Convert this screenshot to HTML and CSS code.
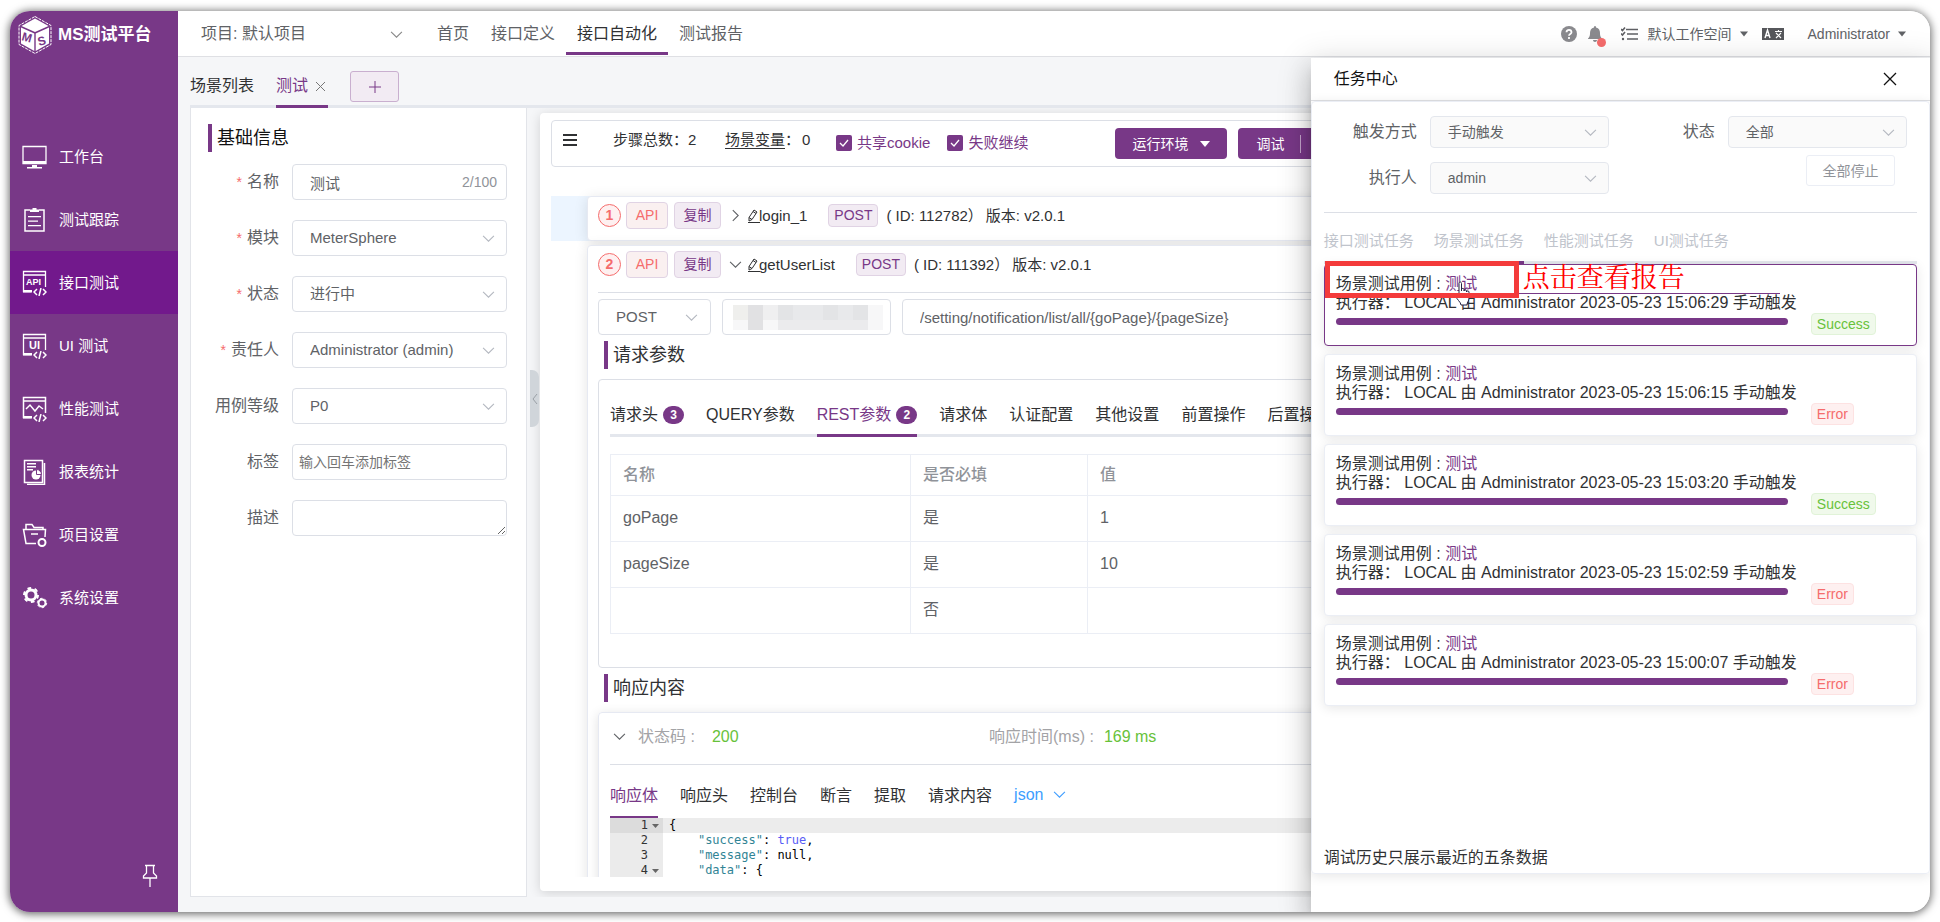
FILE: index.html
```html
<!DOCTYPE html>
<html lang="zh-CN">
<head>
<meta charset="utf-8">
<title>MS测试平台</title>
<link rel="stylesheet" href="styles.css">
</head>
<body>
<svg class="defs" aria-hidden="true">
  <symbol id="chevron" viewBox="0 0 12 12"><path d="M1 3.500l5 5 5-5" fill="none" stroke="currentColor"/></symbol>
  <symbol id="caret" viewBox="0 0 10 10"><path d="M0 2h10L5 8z" fill="currentColor"/></symbol>
  <symbol id="check" viewBox="0 0 12 12"><path d="M2 6l3 3 5-6" fill="none" stroke="currentColor" stroke-width="1.300"/></symbol>
  <symbol id="pencil" viewBox="0 0 14 16"><path d="M2 9.500L7 2l3 2-5 7.500L2 13zM6 3.500l3 2M2 9.500l3 2M1 14.500h12" fill="none" stroke="currentColor"/></symbol>
  <symbol id="code" viewBox="0 0 14 8"><path d="M4 1L1 4l3 3M10 1l3 3-3 3M8 0L6 8" fill="none" stroke="currentColor" stroke-width="1.500"/></symbol>
</svg>
<div class="window">
  <aside class="sidebar">
    <div class="brand">
      <svg width="36" height="40" viewBox="0 0 36 40">
        <path d="M18 1.500l16 9v19l-16 9-16-9v-19z" fill="none" stroke="#fff" stroke-dasharray="3 1"/>
        <path d="M18 3.500l13.500 7.500L18 17 4.500 11z" fill="#fff"/>
        <path d="M4 12.500l13.300 6v17.500L4 28.500zM32 12.500l-13.300 6v17.500L32 28.500z" fill="#fff"/>
        <text x="4" y="25" transform="rotate(16 4 25)" class="logo-letter">M</text>
        <text x="22" y="31" transform="rotate(-16 22 31)" class="logo-letter">S</text>
      </svg>
      <span>MS测试平台</span>
    </div>
    <nav class="menu">
      <a href="#"><svg width="26" height="26" viewBox="0 0 26 26"><path d="M1 2.500h23v17H1z" fill="none" stroke="#fff" stroke-width="1.300"/><path d="M1 17h23v3H1zM10 21h5v2h-5zM5 23h15v1.500H5z" fill="#fff"/></svg>工作台</a>
      <a href="#"><svg width="26" height="26" viewBox="0 0 26 26"><path d="M8 3H3v21h19V3h-5" fill="none" stroke="#fff" stroke-width="1.500"/><path d="M8 2.500h2.500V1h4v1.500H17V5H8zM6 9h13v1.300H6zM6 13.500h10v1.300H6zM6 18h13v1.300H6z" fill="#fff"/></svg>测试跟踪</a>
      <a href="#" class="on"><svg width="26" height="26" viewBox="0 0 26 26"><path d="M9 21.500H1.500v-20h22V17M1 5h22" fill="none" stroke="#fff" stroke-width="1.300"/><path d="M1 20h9v2.500H1z" fill="#fff"/><text x="4" y="15" class="ico-letter">API</text><use href="#code" x="11" y="18" width="14" height="8"/></svg>接口测试</a>
      <a href="#"><svg width="26" height="26" viewBox="0 0 26 26"><path d="M9 21.500H1.500v-20h22V17M1 5h22" fill="none" stroke="#fff" stroke-width="1.300"/><path d="M1 20h9v2.500H1z" fill="#fff"/><text x="7" y="16" class="ico-letter big">UI</text><use href="#code" x="11" y="18" width="14" height="8"/></svg>UI 测试</a>
      <a href="#"><svg width="26" height="26" viewBox="0 0 26 26"><path d="M9 21.500H1.500v-20h22V17M1 5h22M4 13l4-4 5 6 4-5 4 3" fill="none" stroke="#fff" stroke-width="1.500"/><path d="M1 20h9v2.500H1z" fill="#fff"/><use href="#code" x="11" y="18" width="14" height="8"/></svg>性能测试</a>
      <a href="#"><svg width="26" height="26" viewBox="0 0 26 26"><path d="M2.500 1.500h18v22h-18zM22.500 4v21.500H5" fill="none" stroke="#fff" stroke-width="1.500"/><path d="M5 4h9v1.500H5zM5 7h9v1.500H5zM5 10h6v1.500H5z" fill="#fff"/><circle cx="14" cy="16" r="4.500" fill="#fff"/><path d="M14.500 15.500v-5a5 5 0 0 1 5 5z" fill="#fff" stroke="#783887"/></svg>报表统计</a>
      <a href="#"><svg width="26" height="26" viewBox="0 0 26 26"><path d="M4 7V2.500h6l2 3h9V8M14 21.500H4L1.500 7.500h22L23 15M9 12h7" fill="none" stroke="#fff" stroke-width="1.500"/><circle cx="20" cy="20.500" r="3.500" fill="none" stroke="#fff" stroke-width="2"/></svg>项目设置</a>
      <a href="#"><svg width="26" height="26" viewBox="0 0 26 26"><circle cx="9" cy="10" r="5" fill="none" stroke="#fff" stroke-width="3"/><circle cx="9" cy="10" r="7" fill="none" stroke="#fff" stroke-width="2" stroke-dasharray="3.700 3.600"/><circle cx="20" cy="18" r="3.500" fill="none" stroke="#fff" stroke-width="2"/><circle cx="20" cy="18" r="4.700" fill="none" stroke="#fff" stroke-dasharray="2.500 2.400"/></svg>系统设置</a>
    </nav>
    <button class="pin" aria-label="固定菜单"><svg width="16" height="24" viewBox="0 0 16 24"><path d="M3 1.500h10M4.500 2v7L1.500 12v2h13v-2l-3-3V2M8 14v9" fill="none" stroke="#fff" stroke-width="1.300"/></svg></button>
  </aside>

  <div class="main">
    <header class="topbar">
      <div class="pick project"><select aria-label="项目"><option>项目: 默认项目</option></select><svg><use href="#chevron"/></svg></div>
      <nav class="topnav">
        <a href="#">首页</a><a href="#">接口定义</a><a href="#" class="on">接口自动化</a><a href="#">测试报告</a>
      </nav>
      <div class="tools">
        <button aria-label="帮助"><svg width="16" height="16" viewBox="0 0 16 16"><circle cx="8" cy="8" r="8" fill="#8a8a8e"/><path d="M5.500 6.300c0-3.300 5-3.300 5 0C10.500 8 8 8 8 9.800M8 11v2" fill="none" stroke="#fff" stroke-width="1.800"/></svg></button>
        <button class="bell" aria-label="通知"><svg width="16" height="16" viewBox="0 0 16 16"><path d="M8 0c1 0 1 1 1 1.500 3 .5 4 3 4 5.500 0 3 .5 4 2 5.500v.5H1v-.5C2.500 11 3 10 3 7c0-2.500 1-5 4-5.500C7 1 7 0 8 0zM6 14h4c0 2.500-4 2.500-4 0z" fill="#8a8a8e"/></svg></button>
        <button aria-label="任务"><svg width="17" height="14" viewBox="0 0 17 14"><path d="M5 2.500h12M6 7h11M6 12h11M0 2l1.500 1.500L4 .500M0 6.500L1.500 8 4 5" fill="none" stroke="#5f6064" stroke-width="1.600"/><circle cx="2" cy="12" r="1.200" fill="#5f6064"/></svg></button>
        <button class="ws">默认工作空间<svg class="caret"><use href="#caret"/></svg></button>
        <button aria-label="语言"><svg width="22" height="12" viewBox="0 0 22 12"><path d="M0 0h22v12H0z" fill="#56575b"/><path d="M3 10l2.500-8L8 10M4 7.500h3" fill="none" stroke="#fff" stroke-width="1.400"/><path d="M13 3.500h7M16.500 2v1.500M14 5l5 5M19 5l-5 5" fill="none" stroke="#fff" stroke-width="1.200"/></svg></button>
        <button class="user">Administrator<svg class="caret"><use href="#caret"/></svg></button>
      </div>
    </header>

    <div class="page">
      <div class="pagetabs">
        <a href="#">场景列表</a>
        <a href="#" class="on">测试<svg width="9" height="9" viewBox="0 0 9 9"><path d="M0 0l9 9M9 0L0 9" stroke="#777"/></svg></a>
        <button class="add" aria-label="添加"><svg width="12" height="12" viewBox="0 0 12 12"><path d="M6 0v12M0 6h12" stroke="#783887"/></svg></button>
      </div>
      <div class="cols">
        <section class="info">
          <h2 class="title">基础信息</h2>
          <form class="fields">
            <label for="f1" class="req">名称</label><div class="pick"><input id="f1" value="测试"><span class="count">2/100</span></div>
            <label for="f2" class="req">模块</label><div class="pick"><select id="f2"><option>MeterSphere</option></select><svg><use href="#chevron"/></svg></div>
            <label for="f3" class="req">状态</label><div class="pick"><select id="f3"><option>进行中</option></select><svg><use href="#chevron"/></svg></div>
            <label for="f4" class="req">责任人</label><div class="pick"><select id="f4"><option>Administrator (admin)</option></select><svg><use href="#chevron"/></svg></div>
            <label for="f5">用例等级</label><div class="pick"><select id="f5"><option>P0</option></select><svg><use href="#chevron"/></svg></div>
            <label for="f6">标签</label><div class="pick"><input id="f6" class="tags" placeholder="输入回车添加标签"></div>
            <label for="f7">描述</label><div class="pick"><textarea id="f7" rows="1"></textarea></div>
          </form>
        </section>

        <div class="stage">
          <button class="fold" aria-label="收起"><svg width="6" height="12" viewBox="0 0 6 12"><path d="M5 1L1 6l4 5" fill="none" stroke="#9aa0a6"/></svg></button>
          <section class="scenario">
            <div class="bar">
              <svg class="burger" width="14" height="12" viewBox="0 0 14 12"><path d="M0 1h14M0 6h14M0 11h14" stroke="#303133" stroke-width="2"/></svg>
              <span class="total">步骤总数：2</span>
              <span class="vars"><a href="#">场景变量</a>：<b>0</b></span>
              <label class="tick"><input type="checkbox" checked><svg><use href="#check"/></svg>共享cookie</label>
              <label class="tick"><input type="checkbox" checked><svg><use href="#check"/></svg>失败继续</label>
              <button class="primary env">运行环境<svg class="caret"><use href="#caret"/></svg></button>
              <button class="primary debug">调试</button>
            </div>
            <div class="steps">
              <div class="step picked">
                <article class="card">
                  <div class="head">
                    <span class="num">1</span><span class="tag api">API</span><span class="tag copy">复制</span>
                    <svg class="arrow side"><use href="#chevron"/></svg>
                    <svg class="pen"><use href="#pencil"/></svg><span class="name">login_1</span>
                    <span class="tag method">POST</span><span>( ID: 112782）</span><span class="ver">版本: v2.0.1</span>
                  </div>
                </article>
              </div>
              <div class="step">
                <article class="card">
                  <div class="head">
                    <span class="num">2</span><span class="tag api">API</span><span class="tag copy">复制</span>
                    <svg class="arrow"><use href="#chevron"/></svg>
                    <svg class="pen"><use href="#pencil"/></svg><span class="name">getUserList</span>
                    <span class="tag method">POST</span><span>( ID: 111392）</span><span class="ver">版本: v2.0.1</span>
                  </div>
                  <div class="request">
                    <div class="pick verb"><select aria-label="请求方法"><option>POST</option></select><svg><use href="#chevron"/></svg></div>
                    <div class="pick host"><input aria-label="域名"><svg class="mosaic" viewBox="0 0 150 25" aria-hidden="true">
                      <path fill="#efefed" d="M0 0h15v15H0z"/><path fill="#e1e1e3" d="M15 0h15v25H15z"/><path fill="#efeff0" d="M30 0h15v15H30z"/><path fill="#e3e4e6" d="M45 0h15v15H45zM90 0h15v15H90zM120 0h15v15h-15z"/><path fill="#e8e9eb" d="M60 0h30v15H60zM105 0h15v15h-15z"/><path fill="#f7f7f8" d="M135 0h15v25h-15zM0 15h15v10H0zM30 15h15v10H30z"/><path fill="#ebebed" d="M45 15h90v10H45z"/></svg></div>
                    <div class="pick url"><input aria-label="路径" value="/setting/notification/list/all/{goPage}/{pageSize}"></div>
                  </div>
                  <h3 class="title">请求参数</h3>
                  <div class="box params">
                    <nav class="tabs line">
                      <a href="#">请求头<i>3</i></a><a href="#">QUERY参数</a><a href="#" class="on">REST参数<i>2</i></a><a href="#">请求体</a><a href="#">认证配置</a><a href="#">其他设置</a><a href="#">前置操作</a><a href="#">后置操作</a><a href="#">断言规则</a>
                    </nav>
                    <table>
                      <colgroup><col class="c1"><col class="c2"><col></colgroup>
                      <thead><tr><th>名称</th><th>是否必填</th><th>值</th></tr></thead>
                      <tbody>
                        <tr><td>goPage</td><td>是</td><td>1</td></tr>
                        <tr><td>pageSize</td><td>是</td><td>10</td></tr>
                        <tr><td></td><td>否</td><td></td></tr>
                      </tbody>
                    </table>
                  </div>
                  <h3 class="title">响应内容</h3>
                  <div class="box reply">
                    <div class="status">
                      <svg class="arrow"><use href="#chevron"/></svg>
                      <div class="code">状态码 :<b>200</b></div>
                      <div class="time">响应时间(ms) :<b>169 ms</b></div>
                    </div>
                    <nav class="tabs thin">
                      <a href="#" class="on">响应体</a><a href="#">响应头</a><a href="#">控制台</a><a href="#">断言</a><a href="#">提取</a><a href="#">请求内容</a>
                      <button class="json">json<svg><use href="#chevron"/></svg></button>
                    </nav>
                    <div class="editor">
                      <div class="row cur"><span class="ln">1<svg><use href="#caret"/></svg></span><code>{</code></div>
                      <div class="row"><span class="ln">2</span><code>    <em>"success"</em>: <u>true</u>,</code></div>
                      <div class="row"><span class="ln">3</span><code>    <em>"message"</em>: null,</code></div>
                      <div class="row"><span class="ln">4<svg><use href="#caret"/></svg></span><code>    <em>"data"</em>: {</code></div>
                    </div>
                  </div>
                </article>
              </div>
            </div>
          </section>
        </div>
      </div>
    </div>
  </div>

  <aside class="drawer">
    <div class="dhead"><h2>任务中心</h2><button aria-label="关闭"><svg width="14" height="14" viewBox="0 0 14 14"><path d="M1 1l12 12M13 1L1 13" stroke="#111" stroke-width="1.300"/></svg></button></div>
    <div class="dbody">
      <form class="filters">
        <label for="g1">触发方式</label><div class="pick"><select id="g1"><option>手动触发</option></select><svg><use href="#chevron"/></svg></div>
        <label for="g2">状态</label><div class="pick"><select id="g2"><option>全部</option></select><svg><use href="#chevron"/></svg></div>
        <label for="g3">执行人</label><div class="pick"><select id="g3"><option>admin</option></select><svg><use href="#chevron"/></svg></div>
        <button type="button" class="stop">全部停止</button>
      </form>
      <nav class="dtabs"><a href="#">接口测试任务</a><a href="#" class="on">场景测试任务</a><a href="#">性能测试任务</a><a href="#">UI测试任务</a></nav>
      <div class="tasks">
        <article class="task on">
          <div class="desc"><p class="case">场景测试用例 : <a href="#">测试</a></p><p>执行器： LOCAL 由 Administrator 2023-05-23 15:06:29 手动触发</p><div class="progress"></div></div>
          <span class="state ok">Success</span>
          <svg class="hand" width="16" height="26" viewBox="0 0 16 26"><path d="M4 15V2.500c0-2 2.500-2 2.500 0V10V8.500c0-1.500 2.500-1.500 2.500 0V10c0-1.500 2.500-1.500 2.500 0v1c0-1.500 2.500-1.500 2.500 0v6c0 3-2 4-2 7H6c0-3-5-6-5-9 0-2 2-2 3 0z" fill="#fff" stroke="#222244"/></svg>
          <div class="mark"></div><strong class="note">点击查看报告</strong>
        </article>
        <article class="task">
          <div class="desc"><p class="case">场景测试用例 : <a href="#">测试</a></p><p>执行器： LOCAL 由 Administrator 2023-05-23 15:06:15 手动触发</p><div class="progress"></div></div>
          <span class="state err">Error</span>
        </article>
        <article class="task">
          <div class="desc"><p class="case">场景测试用例 : <a href="#">测试</a></p><p>执行器： LOCAL 由 Administrator 2023-05-23 15:03:20 手动触发</p><div class="progress"></div></div>
          <span class="state ok">Success</span>
        </article>
        <article class="task">
          <div class="desc"><p class="case">场景测试用例 : <a href="#">测试</a></p><p>执行器： LOCAL 由 Administrator 2023-05-23 15:02:59 手动触发</p><div class="progress"></div></div>
          <span class="state err">Error</span>
        </article>
        <article class="task">
          <div class="desc"><p class="case">场景测试用例 : <a href="#">测试</a></p><p>执行器： LOCAL 由 Administrator 2023-05-23 15:00:07 手动触发</p><div class="progress"></div></div>
          <span class="state err">Error</span>
        </article>
      </div>
      <p class="tip">调试历史只展示最近的五条数据</p>
    </div>
  </aside>
</div>
</body>
</html>
```
FILE: styles.css
```css
* { box-sizing: border-box; }
:root { --p: #783887; --line: #dcdfe6; --soft: #ebeef5; --text: #606266; --ink: #303133; }
body { margin: 0; padding: 11px 10px 10px; height: 100vh; background: #fff; color: var(--ink); font: 16px/20px "Liberation Sans", "Noto Sans CJK SC", sans-serif; }
a { color: inherit; text-decoration: none; }
h2, h3, p { margin: 0; font-weight: 400; }
button, input, select, textarea { font: inherit; color: inherit; margin: 0; }
button { border: 0; background: none; padding: 0; display: inline-flex; align-items: center; justify-content: center; }
svg { flex: none; }
.defs { position: absolute; width: 0; height: 0; }
.window { position: relative; display: flex; height: 100%; border-radius: 20px; overflow: hidden; background: #f5f6f8; box-shadow: 0 1px 9px 1px rgba(0, 0, 0, .6); }

.sidebar { width: 168px; flex: none; background: var(--p); color: #fff; display: flex; flex-direction: column; }
.brand { display: flex; align-items: center; gap: 5px; height: 48px; padding-left: 7px; font-weight: 700; font-size: 17px; margin-bottom: 66px; }
.logo-letter { font: 700 12px "Liberation Sans", sans-serif; fill: var(--p); }
.ico-letter { font: 700 9px "Liberation Sans", sans-serif; fill: #fff; }
.ico-letter.big { font-size: 11px; }
.menu a { display: flex; align-items: center; gap: 11px; height: 63px; padding-left: 12px; font-size: 15px; }
.menu a.on { background: #72198c; }
.pin { margin: auto 20px 24px auto; }

.main { flex: 1; min-width: 0; display: flex; flex-direction: column; }
.topbar { display: flex; height: 46px; flex: none; background: #fff; border-bottom: 1px solid #dfe0e4; color: var(--text); }
.pick { position: relative; display: flex; align-items: center; }
.pick > select, .pick > input, .pick > textarea { width: 100%; height: 36px; border: 1px solid var(--line); border-radius: 4px; background: #fff; color: var(--text); font-size: 15px; padding: 0 17px; appearance: none; outline: 0; }
.pick > svg { position: absolute; right: 12px; width: 13px; height: 13px; color: #b4b8c0; pointer-events: none; }
.topbar .project { width: 226px; margin: 5px 22px 4px 0; }
.project > select { border: 0; padding-left: 23px; font-size: 16px; }
.project > svg { right: 1px; color: #888; }
.topnav { display: flex; }
.topnav a { padding: 0 11px; height: 44px; line-height: 45px; border-bottom: 3px solid transparent; }
.topnav .on { border-color: var(--p); color: var(--ink); }
.tools { display: flex; align-items: center; margin-left: auto; padding-right: 24px; font-size: 14px; }
.tools button { margin-right: 16px; }
.tools .bell { position: relative; margin-right: 18px; margin-left: -6px; }
.bell::after { content: ""; position: absolute; right: -3px; bottom: -5px; width: 9px; height: 9px; border-radius: 50%; background: #f56c6c; }
.caret { width: 10px; height: 10px; margin-left: 12px; }
.tools .caret { width: 8px; height: 10px; margin-left: 8px; }
.tools .ws { margin-left: -6px; margin-right: 14px; }
.tools .user { margin: 0 0 0 8px; }

.page { flex: 1; min-height: 0; display: flex; flex-direction: column; padding: 0 0 15px 12px; }
.pagetabs { display: flex; height: 51px; flex: none; gap: 22px; box-shadow: inset 0 -3px #e4e7ed; }
.pagetabs a { line-height: 58px; height: 51px; }
.pagetabs .on { color: var(--p); border-bottom: 3px solid var(--p); display: flex; align-items: center; gap: 8px; padding: 10px 3px 0 0; line-height: 38px; }
.add { width: 49px; height: 31px; margin-top: 14px; background: #f2ebf3; border: 1px solid #c9afcf; border-radius: 3px; }
.cols { flex: 1; min-height: 0; display: flex; }
.info { width: 337px; flex: none; background: #fff; border: 1px solid #e2e4e9; border-top: 0; padding: 16px 19px 0 17px; }
.title { border-left: 4px solid var(--p); padding-left: 5px; font-size: 18px; height: 28px; line-height: 28px; color: #111; }
.fields { display: grid; grid-template-columns: 1fr 215px; gap: 20px 13px; margin-top: 12px; align-items: center; justify-items: end; color: var(--text); }
.fields .pick { width: 100%; }
.req::before { content: "*"; color: #f56c6c; font-size: 14px; margin-right: 5px; }
.count { position: absolute; right: 10px; font-size: 14px; color: #909399; }
.pick > .tags { font-size: 14px; padding: 0 6px; }
.tags::placeholder { color: #757575; }
.pick > textarea { resize: vertical; }

.stage { position: relative; flex: 1; min-width: 0; overflow: hidden; padding: 5px 0 6px 13px; }
.fold { position: absolute; left: 3px; top: 262px; width: 9px; height: 57px; background: #d0d5da; border-radius: 0 7px 7px 0; }
.scenario { height: 100%; background: #fff; border-radius: 4px; box-shadow: 0 2px 12px rgba(0, 0, 0, .15); padding: 7px 11px 14px; display: flex; flex-direction: column; }
.bar { display: flex; align-items: center; height: 47px; flex: none; border: 1px solid var(--line); border-radius: 4px; padding-left: 11px; font-size: 15px; }
.burger { margin: -8px 36px 0 0; }
.total { width: 112px; margin-top: -8px; }
.vars { width: 111px; margin-top: -8px; }
.vars a { border-bottom: 1px solid var(--ink); }
.vars b { font-weight: 400; margin-left: 2px; }
.tick { position: relative; display: flex; align-items: center; gap: 5px; color: var(--p); margin: -1px 17px 0 0; }
.tick input { appearance: none; width: 16px; height: 16px; margin: 0; background: var(--p); border-radius: 2px; }
.tick svg { position: absolute; left: 2px; width: 12px; height: 12px; color: #fff; }
.primary { background: var(--p); color: #fff; font-size: 14px; height: 31px; border-radius: 4px; }
.env { width: 112px; margin-left: 70px; }
.debug { width: 130px; margin-left: 11px; justify-content: flex-start; padding-left: 18px; }
.debug::after { content: ""; width: 1px; height: 18px; background: #c3a5ca; margin-left: 16px; }
.steps { flex: 1; min-height: 0; overflow: hidden; padding-top: 29px; }
.step { padding-left: 36px; margin-bottom: 4px; }
.picked { background: #ecf5ff; }
.card { background: #fff; border: 1px solid #e6e9f2; border-radius: 4px; box-shadow: 0 2px 14px rgba(0, 0, 0, .11); padding: 0 10px; }
.picked .card { padding-bottom: 6px; }
.head { display: flex; align-items: center; height: 37px; font-size: 15px; white-space: nowrap; }
.num { width: 23px; height: 23px; border: 1px solid #f56c6c; border-radius: 50%; background: #fef0f0; color: #f56c6c; font-weight: 700; font-size: 14px; line-height: 21px; text-align: center; margin-right: 5px; }
.tag { border: 1px solid #e0d3e4; border-radius: 4px; background: #f2ebf3; color: var(--p); font-size: 14px; text-align: center; height: 27px; line-height: 24px; }
.api { width: 42px; background: #faf0f0; color: #f56c6c; margin-right: 6px; }
.copy { width: 47px; margin-right: 8px; }
.arrow { width: 13px; height: 13px; color: var(--text); }
.side { transform: rotate(-90deg); }
.pen { width: 14px; height: 16px; margin: 0 -2px 0 5px; color: var(--ink); }
.name { margin-right: 21px; }
.method { width: 50px; height: 23px; line-height: 21px; margin-right: 8px; }
.ver { margin-left: 3px; }
.request { display: flex; gap: 11px; border-top: 1px solid var(--line); margin-top: 9px; padding: 6px 0; }
.verb { width: 113px; }
.verb > svg { right: 13px; }
.host { width: 169px; }
.url { flex: 1; }
.pick > .mosaic { width: 150px; height: 25px; left: 11px; right: auto; }
.card .title { margin-left: 6px; color: var(--ink); }
.box { border: 1px solid var(--line); border-radius: 4px; margin: 10px 0 6px; padding: 0 0 33px 11px; }
.tabs { display: flex; gap: 22px; white-space: nowrap; color: var(--ink); }
.line { box-shadow: inset 0 -3px #e4e7ed; height: 42px; margin-top: 15px; }
.tabs a { display: flex; align-items: center; gap: 5px; border-bottom: 3px solid transparent; }
.tabs a.on { color: var(--p); border-color: var(--p); }
.tabs i { font: 700 12px/18px "Liberation Sans", sans-serif; width: 21px; height: 18px; text-align: center; background: var(--p); color: #fff; border-radius: 9px; }
table { width: 100%; border-collapse: collapse; table-layout: fixed; margin-top: 17px; color: var(--text); }
.c1 { width: 300px; }
.c2 { width: 177px; }
th, td { border: 1px solid var(--soft); text-align: left; padding: 0 12px; height: 46px; }
th { height: 41px; color: #909399; font-weight: 500; }
td { padding-bottom: 2px; }
.reply { border-color: #e6e9f2; box-shadow: 0 2px 12px rgba(0, 0, 0, .12); padding-bottom: 80px; }
.status { display: flex; align-items: center; height: 52px; border-bottom: 1px solid var(--line); color: #a3a3a6; padding: 0 0 4px 3px; }
.status .code { width: 351px; margin-left: 12px; }
.status b { color: #67c23a; font-weight: 400; margin-left: 17px; }
.status .time b { margin-left: 10px; }
.thin { height: 43px; margin-top: 10px; }
.thin a { border-bottom-width: 2px; }
.json { color: #409eff; gap: 10px; padding-bottom: 4px; }
.json svg { width: 13px; height: 13px; }
.editor { font: 12px/15px "DejaVu Sans Mono", monospace; color: #000; }
.row { display: flex; }
.ln { position: relative; width: 53px; text-align: right; padding-right: 15px; background: #ebebeb; color: #333; }
.ln svg { position: absolute; right: 4px; top: 4px; width: 7px; height: 8px; color: #666; }
.row code { flex: 1; font: inherit; white-space: pre; padding-left: 6px; }
.cur code { background: #ececec; }
.cur .ln { background: #dcdcdc; }
.row em { font-style: normal; color: #318495; }
.row u { text-decoration: none; color: #585cf6; }

.drawer { position: absolute; right: 0; top: 47px; bottom: 0; width: 32.25%; min-width: 600px; background: #fff; display: flex; flex-direction: column; padding-bottom: 38px; box-shadow: 0 8px 10px -5px rgba(0, 0, 0, .2), 0 16px 24px 2px rgba(0, 0, 0, .14), 0 6px 30px 5px rgba(0, 0, 0, .12); }
.dhead { display: flex; justify-content: space-between; align-items: center; height: 43px; flex: none; padding: 0 33px 0 23px; border-bottom: 1px solid #dfe0e4; }
.dhead h2 { font-size: 16px; color: #111; }
.dbody { flex: 1; min-height: 0; border: 1px solid var(--soft); border-radius: 4px; box-shadow: 0 2px 12px rgba(0, 0, 0, .1); padding: 14px 12px 5px; display: flex; flex-direction: column; }
.filters { display: grid; grid-template-columns: 93px 179px 93px 1fr; column-gap: 13px; row-gap: 14px; align-items: center; border-bottom: 1px solid var(--line); padding: 0 10px 18px 0; color: var(--text); }
.filters label { text-align: right; }
.filters .pick > select { height: 32px; background: #fafafa; border-color: #e4e7ed; font-size: 14px; }
.stop { grid-column: 4; justify-self: end; align-self: start; margin: -7px 12px 0 0; width: 89px; height: 31px; border: 1px solid var(--soft); border-radius: 3px; font-size: 14px; color: #909399; }
.dtabs { display: flex; gap: 20px; height: 51px; flex: none; font-size: 15px; line-height: 56px; color: #c0c4cc; box-shadow: inset 0 -3px #e4e7ed; }
.dtabs .on { border-bottom: 3px solid var(--p); }
.tasks { display: flex; flex-direction: column; gap: 8px; }
.task { position: relative; display: flex; height: 82px; border: 1px solid var(--soft); border-radius: 4px; background: #fff; box-shadow: 0 2px 12px rgba(0, 0, 0, .1); padding: 10px 11px; line-height: 18px; }
.task.on { border-color: var(--p); }
.desc { width: 452px; flex: none; white-space: nowrap; }
.case { margin-bottom: 1px; }
.case a { color: var(--p); }
.task.on .case { border-bottom: 1px solid var(--p); margin: 0 8px 0 0; }
.progress { height: 7px; border-radius: 4px; background: var(--p); margin-top: 6px; }
.state { align-self: flex-start; margin: 38px 0 0 23px; height: 22px; border: 1px solid; border-radius: 4px; padding: 0 5px; font-size: 14px; line-height: 20px; }
.ok { color: #67c23a; background: #f0f9eb; border-color: #e1f3d8; }
.err { color: #f56c6c; background: #fef0f0; border-color: #fde2e2; }
.mark { position: absolute; left: 0; top: -4px; width: 194px; height: 37px; border: 5px solid #f43b3b; }
.note { position: absolute; left: 198px; top: -6px; font: 400 27px/34px "Noto Serif CJK SC", "Noto Sans CJK SC", serif; color: #f00; }
.hand { position: absolute; left: 130px; top: 16px; }
.tip { margin-top: auto; }
```
